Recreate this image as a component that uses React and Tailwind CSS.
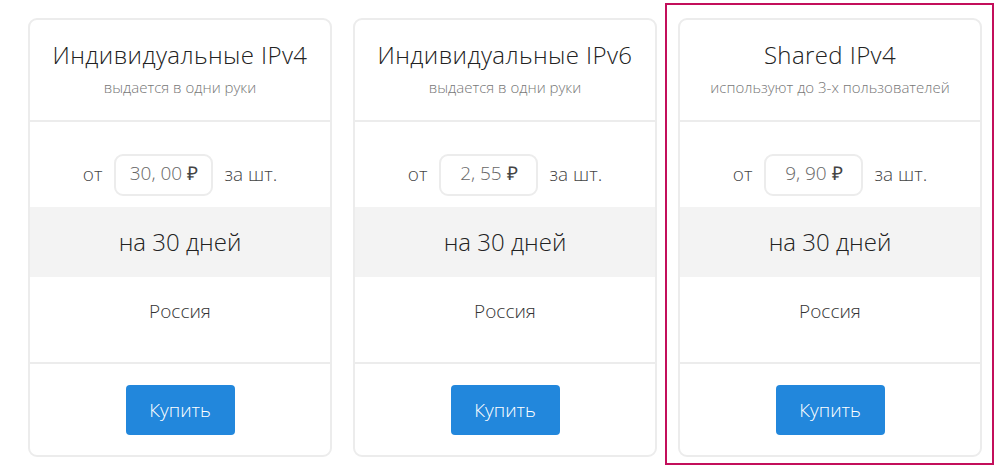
import React from 'react';

const plans = [
  { title: 'Индивидуальные IPv4', note: 'выдается в одни руки', price: '30, 00' },
  { title: 'Индивидуальные IPv6', note: 'выдается в одни руки', price: '2, 55' },
  { title: 'Shared IPv4', note: 'используют до 3-х пользователей', price: '9, 90' },
];

function Card({ plan }) {
  return (
    <div className="w-[304px] shrink-0 rounded-[9px] border-2 border-[#ececec] bg-white flex flex-col overflow-hidden">
      {/* header */}
      <div className="h-[102px] border-b-2 border-[#ececec] flex flex-col items-center pt-[19px]">
        <div className="text-[24px] leading-[32px] text-[#222] font-light tracking-[0.4px]">{plan.title}</div>
        <div className="mt-[6px] text-[15px] leading-[20px] text-[#777] font-light">{plan.note}</div>
      </div>

      {/* price */}
      <div className="h-[85px] flex items-center justify-center pt-[20px]">
        <span className="text-[19px] text-[#444] font-light">от</span>
        <div className="ml-[12px] mr-[11px] w-[99px] h-[42px] rounded-[9px] border-2 border-[#ececec] flex items-center justify-center text-[19px] text-[#666] font-light pb-[2px]">
          {plan.price}
          <span className="ml-[5px] text-[#444] font-normal">₽</span>
        </div>
        <span className="text-[19px] text-[#444] font-light">за шт.</span>
      </div>

      {/* period */}
      <div className="h-[70px] bg-[#f3f3f3] flex items-center justify-center text-[24px] text-[#222] font-light">
        на 30 дней
      </div>

      {/* country */}
      <div className="h-[87px] border-b-2 border-[#ececec] flex items-center justify-center pb-[17px] text-[19px] text-[#333] font-light">
        Россия
      </div>

      {/* buy */}
      <div className="h-[91px] flex items-start justify-center pt-[21px]">
        <button className="w-[109px] h-[50px] rounded-[4px] bg-[#2287dc] text-white text-[19px] font-light">
          Купить
        </button>
      </div>
    </div>
  );
}

export default function App() {
  return (
    <div className="w-[1004px] h-[472px] bg-white flex items-start pl-[28px] pt-[3px] font-['Open_Sans',sans-serif]">
      <div className="mt-[15px]">
        <Card plan={plans[0]} />
      </div>
      <div className="mt-[15px] ml-[21px]">
        <Card plan={plans[1]} />
      </div>
      <div className="ml-[8px] border-2 border-[#c30f5b] pt-[13px] pl-[11px] pr-[10px] pb-[6px]">
        <Card plan={plans[2]} />
      </div>
    </div>
  );
}
